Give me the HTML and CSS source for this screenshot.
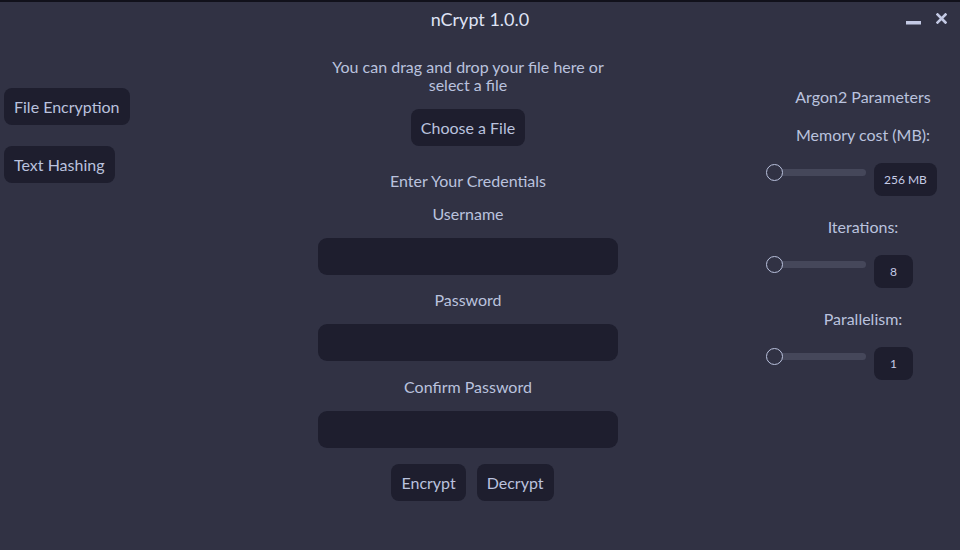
FILE: index.html
```html
<!DOCTYPE html>
<html>
<head>
<meta charset="utf-8">
<link rel="stylesheet" href="styles.css">
</head>
<body>
<div class="app">
  <header class="titlebar">
    <div></div>
    <div class="title">nCrypt 1.0.0</div>
    <div class="controls">
      <svg class="min" width="15" height="12" viewBox="0 0 15 12"><rect x="0" y="8" width="15" height="3.5" fill="#c3c9e4"/></svg>
      <svg class="close" width="11" height="11" viewBox="0 0 11 11"><path d="M1.5 1.5 L9.5 9.5 M9.5 1.5 L1.5 9.5" stroke="#c3c9e4" stroke-width="2.6" stroke-linecap="square"/></svg>
    </div>
  </header>
  <main class="main">
    <nav class="sidebar">
      <button class="btn">File Encryption</button>
      <button class="btn">Text Hashing</button>
    </nav>
    <section class="center">
      <p class="desc">You can drag and drop your file here or select a file</p>
      <button class="btn choose">Choose a File</button>
      <p class="heading">Enter Your Credentials</p>
      <label class="label first">Username</label>
      <div class="input"></div>
      <label class="label">Password</label>
      <div class="input"></div>
      <label class="label last">Confirm Password</label>
      <div class="input"></div>
      <div class="actions">
        <button class="btn">Encrypt</button>
        <button class="btn">Decrypt</button>
      </div>
    </section>
    <aside class="params">
      <p class="ptitle">Argon2 Parameters</p>
      <p class="plabel">Memory cost (MB):</p>
      <div class="prow"><div class="slider"><span class="thumb"></span></div><span class="val">256 MB</span></div>
      <p class="plabel">Iterations:</p>
      <div class="prow"><div class="slider"><span class="thumb"></span></div><span class="val">8</span></div>
      <p class="plabel">Parallelism:</p>
      <div class="prow"><div class="slider"><span class="thumb"></span></div><span class="val">1</span></div>
    </aside>
  </main>
</div>
</body>
</html>
```
FILE: styles.css
```css
* { box-sizing: border-box; }
html, body { margin: 0; padding: 0; }
body {
  background: #313244;
  font-family: Lato, "Noto Sans", sans-serif;
  font-size: 16px;
  color: #bac2de;
  width: 960px;
  height: 550px;
  overflow: hidden;
}
.app { height: 550px; }
.titlebar {
  border-top: 2px solid #11111b;
  height: 36px;
  display: grid;
  grid-template-columns: 1fr auto 1fr;
  align-items: center;
}
.title {
  font-size: 18px;
  color: #dfe3f5;
  line-height: 34px;
}
.controls {
  justify-self: end;
  display: flex;
  align-items: flex-start;
  gap: 15px;
  padding-right: 13px;
  height: 34px;
  padding-top: 11px;
}
.main {
  display: grid;
  grid-template-columns: 318px 300px 1fr;
}
.btn {
  font-family: inherit;
  font-size: 16px;
  color: #bac2de;
  background: #1e1e2e;
  border: none;
  border-radius: 8px;
  height: 37px;
  padding: 0 10px;
  line-height: 37px;
}
.sidebar {
  padding-top: 52px;
  padding-left: 4px;
  display: flex;
  flex-direction: column;
  align-items: flex-start;
  gap: 21px;
}
.center {
  padding-top: 22px;
  display: flex;
  flex-direction: column;
  align-items: center;
  text-align: center;
}
.desc {
  margin: 0;
  width: 290px;
  line-height: 18px;
}
.choose { margin-top: 15px; }
.heading { margin: 25px 0 0; line-height: 20px; }
.label { display: block; line-height: 20px; margin-top: 15px; }
.label.first { margin-top: 13px; }
.label.last { margin-top: 16px; }
.input {
  width: 300px;
  height: 37px;
  background: #1e1e2e;
  border-radius: 9px;
  margin-top: 14px;
}
.actions {
  margin-top: 16px;
  padding-left: 9px;
  display: flex;
  gap: 11px;
}
.params {
  justify-self: end;
  width: 194px;
  padding-top: 51px;
  display: flex;
  flex-direction: column;
  align-items: center;
}
.ptitle { margin: 0; line-height: 20px; }
.plabel { margin: 18px 0 0; line-height: 20px; }
.prow {
  margin-top: 19px;
  display: flex;
  align-items: flex-start;
  gap: 8px;
  width: 100%;
}
.prow + .plabel { margin-top: 36px; }
.slider {
  position: relative;
  width: 100px;
  height: 17px;
}
.slider::before {
  content: "";
  position: absolute;
  left: 8px;
  right: 0;
  top: 5px;
  height: 7px;
  border-radius: 4px;
  background: #45475a;
}
.thumb {
  position: absolute;
  left: 0;
  top: 0;
  width: 17px;
  height: 17px;
  border-radius: 50%;
  border: 1.5px solid #bac2de;
  background: #313244;
}
.val {
  background: #1e1e2e;
  border-radius: 8px;
  height: 33px;
  line-height: 33px;
  min-width: 39px;
  padding: 0 10px;
  font-size: 12px;
  text-align: center;
  color: #c6cce6;
  margin-top: -1px;
  margin-bottom: -16px;
}
```
